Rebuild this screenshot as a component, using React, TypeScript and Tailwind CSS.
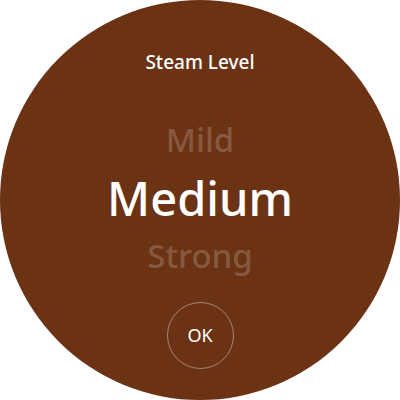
import React from "react";

const levels = ["Mild", "Medium", "Strong"];

export default function App() {
  const selected = 1;

  return (
    <div className="w-[400px] h-[400px] bg-white">
      <div
        className="w-[400px] h-[400px] rounded-full bg-[#6b3214] flex flex-col items-center text-white"
        style={{ fontFamily: '"Noto Sans", sans-serif' }}
      >
        <h1 className="mt-[49px] text-[19px] leading-[26px] font-medium">
          Steam Level
        </h1>

        {/* picker */}
        <div className="mt-[36px] flex flex-col items-center">
          {levels.map((level, i) => (
            <div
              key={level}
              className={
                i === selected
                  ? "text-[47px] leading-[58px] font-medium text-white"
                  : "text-[33px] leading-[58px] font-medium text-white/20"
              }
            >
              {level}
            </div>
          ))}
        </div>

        <button className="mt-[17px] w-[67px] h-[67px] rounded-full border border-white/40 flex items-center justify-center text-[18px]">
          OK
        </button>
      </div>
    </div>
  );
}
